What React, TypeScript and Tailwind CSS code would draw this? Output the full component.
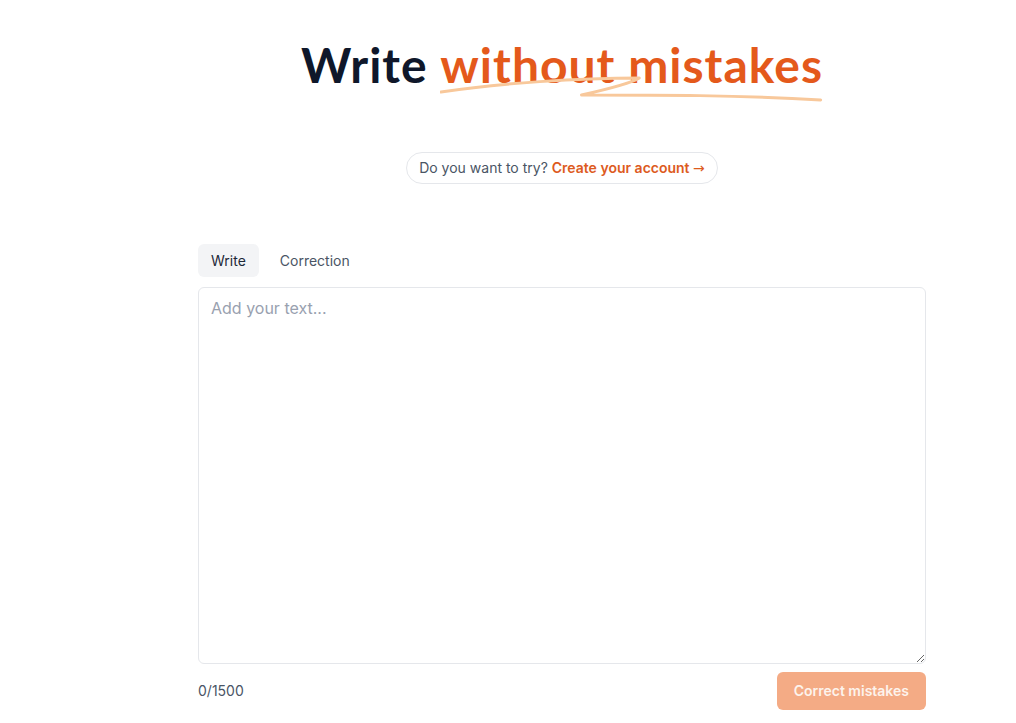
import { useState } from "react"

export default function App() {
  const [text, setText] = useState("")
  const [tab, setTab] = useState<"write" | "correction">("write")

  return (
    <div className="min-h-screen bg-white font-['Inter',sans-serif]">
      <div className="flex justify-center pl-[108px]">
        <div className="w-[728px] flex flex-col items-center">
          {/* titre */}
          <h1 className="mt-[37px] text-[48px] leading-[56px] font-bold tracking-[1px] text-[#0f172a] font-['Lato',sans-serif]">
            Write{" "}
            <span className="relative inline-block text-[#e4591b]">
              without mistakes
              <svg
                className="absolute left-0 top-[36px] w-full pointer-events-none"
                height="32"
                viewBox="0 0 384 32"
                preserveAspectRatio="none"
                fill="none"
              >
                <path
                  d="M1 19 C 60 10, 140 5, 200 5 C 192 10, 160 18, 142 22 C 220 22, 300 22, 382 27"
                  stroke="#f8c89b"
                  strokeWidth="3"
                  strokeLinecap="round"
                  strokeLinejoin="round"
                />
              </svg>
            </span>
          </h1>

          {/* invitation */}
          <div className="mt-[59px] h-8 flex items-center rounded-full border border-gray-200 px-3 text-sm">
            <span className="text-gray-600">Do you want to try?</span>
            <a href="#" className="ml-1 font-semibold text-[#dd5b1e]">
              Create your account{" "}
              <span className="font-normal font-['DejaVu_Sans',sans-serif]">→</span>
            </a>
          </div>

          {/* éditeur */}
          <div className="w-full mt-[60px]">
            <div className="flex gap-2 text-sm">
              <button
                onClick={() => setTab("write")}
                className={`h-[33px] px-[13px] rounded-md ${tab === "write" ? "bg-gray-100 text-gray-800" : "text-gray-600"}`}
              >
                Write
              </button>
              <button
                onClick={() => setTab("correction")}
                className={`h-[33px] px-[13px] rounded-md ${tab === "correction" ? "bg-gray-100 text-gray-800" : "text-gray-600"}`}
              >
                Correction
              </button>
            </div>
            <textarea
              value={text}
              onChange={(e) => setText(e.target.value.slice(0, 1500))}
              placeholder="Add your text..."
              className="mt-[10px] block w-full h-[377px] rounded-md border border-gray-200 px-3 py-2 text-base text-gray-900 placeholder:text-gray-400 outline-none"
            />
            <div className="mt-2 flex items-center justify-between">
              <span className="text-sm text-gray-600">{text.length}/1500</span>
              <button
                disabled={text.length === 0}
                className="h-[38px] px-[17px] rounded-md bg-[#f4ab85] text-sm font-semibold text-[#fdf3ec]"
              >
                Correct mistakes
              </button>
            </div>
          </div>
        </div>
      </div>
    </div>
  )
}
